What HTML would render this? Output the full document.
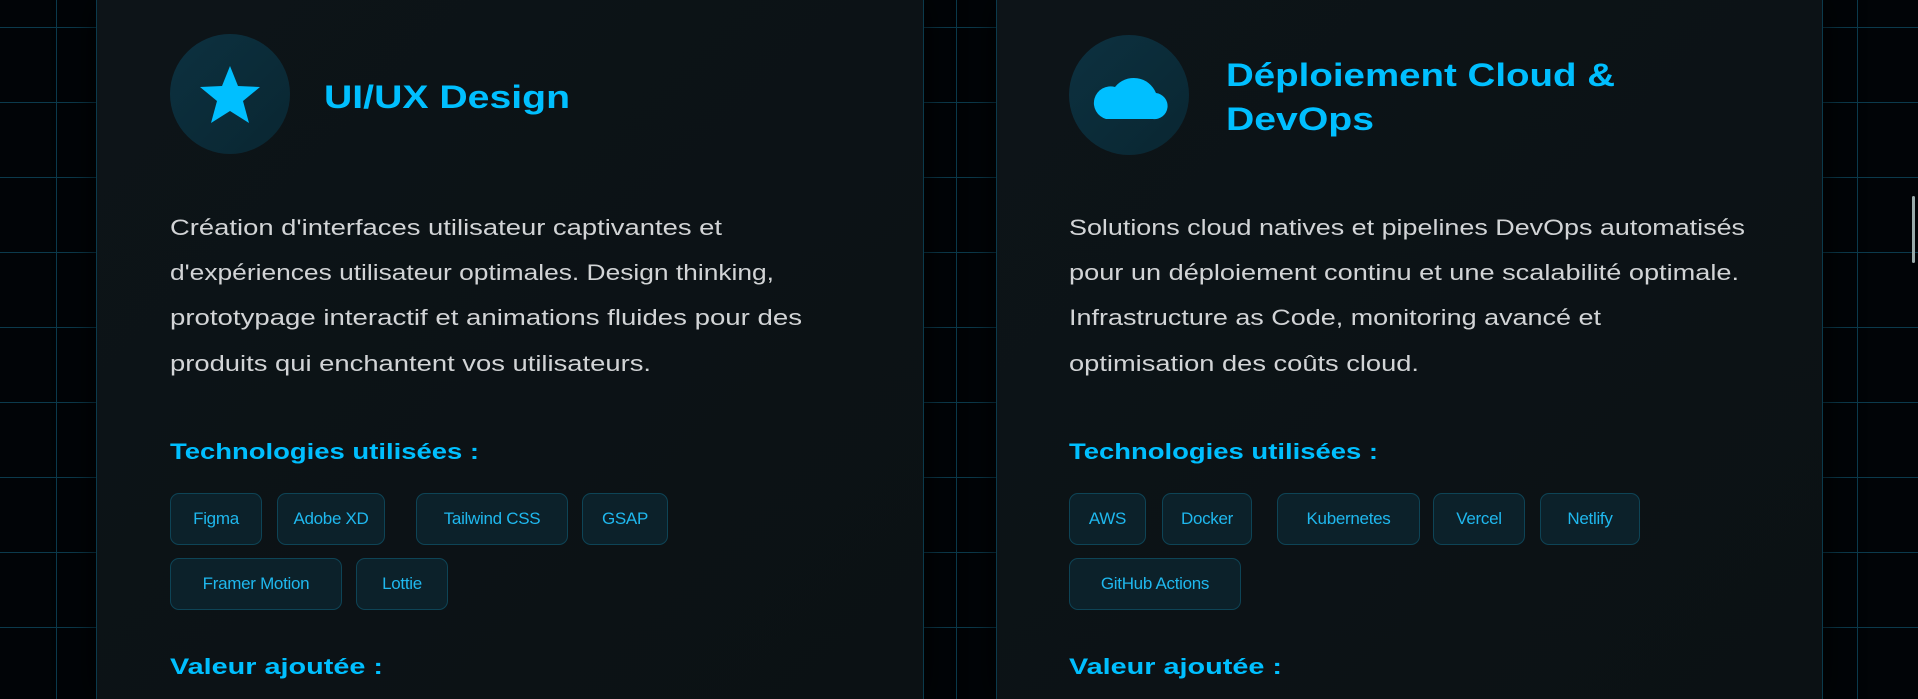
<!DOCTYPE html>
<html><head><meta charset="utf-8"><style>
*{margin:0;padding:0;box-sizing:border-box}
body{width:1918px;height:699px;overflow:hidden;background:#010407;position:relative;font-family:"Liberation Sans",sans-serif}
.grid{position:absolute;inset:0;
background-image:linear-gradient(#0b3a4c 1px,transparent 1px);background-size:100% 75px;background-position:0 27px}
.vl{position:absolute;top:0;height:699px;width:1px;background:#0b3a4c}
.card{position:absolute;top:0;height:699px;background:linear-gradient(135deg,#0d1418,#0b1114);border-left:1px solid #0b3a4c;border-right:1px solid #0b3a4c;box-shadow:0 0 30px rgba(0,0,0,.9)}
.ic{position:absolute;width:120px;height:120px;border-radius:50%;background:linear-gradient(135deg,#0c3140,#0a2631)}
.tag{position:absolute;height:52px;line-height:50px;text-align:center;border:1px solid #0e4456;border-radius:9px;background:#0c212a;color:#1fb8ee;font-size:17px;white-space:nowrap;letter-spacing:-.3px}
svg.t{position:absolute;left:0;top:0}
</style></head><body>
<div class="grid"></div>
<div class="vl" style="left:56px"></div>
<div class="vl" style="left:956px"></div>
<div class="vl" style="left:1857px"></div>

<div class="card" style="left:96px;width:828px">
 <div class="ic" style="left:73px;top:34px">
  <svg width="120" height="120" viewBox="0 0 120 120"><polygon fill="#00bfff" points="60,32 68,52 90,53 73,67 79,89 60,77 41,89 47,67 30,53 52,52"/></svg>
 </div>
</div>
<div class="card" style="left:996px;width:827px">
 <div class="ic" style="left:72px;top:35px">
  <svg width="120" height="120" viewBox="0 0 120 120"><path fill="#00bfff" d="M37,84 H84 A13,13 0 0 0 87,58 A24,24 0 0 0 46,52 A16,16 0 0 0 37,84 Z"/></svg>
 </div>
</div>

<div class="tag" style="left:170px;top:493px;width:92px">Figma</div>
<div class="tag" style="left:277px;top:493px;width:108px">Adobe XD</div>
<div class="tag" style="left:416px;top:493px;width:152px">Tailwind CSS</div>
<div class="tag" style="left:582px;top:493px;width:86px">GSAP</div>
<div class="tag" style="left:170px;top:558px;width:172px">Framer Motion</div>
<div class="tag" style="left:356px;top:558px;width:92px">Lottie</div>

<div class="tag" style="left:1069px;top:493px;width:77px">AWS</div>
<div class="tag" style="left:1162px;top:493px;width:90px">Docker</div>
<div class="tag" style="left:1277px;top:493px;width:143px">Kubernetes</div>
<div class="tag" style="left:1433px;top:493px;width:92px">Vercel</div>
<div class="tag" style="left:1540px;top:493px;width:100px">Netlify</div>
<div class="tag" style="left:1069px;top:558px;width:172px">GitHub Actions</div>

<svg class="t" width="1918" height="699" font-family="Liberation Sans, sans-serif">
 <g fill="#00bfff" font-weight="bold" font-size="32">
  <text x="324" y="108" textLength="246" lengthAdjust="spacingAndGlyphs">UI/UX Design</text>
  <text x="1226" y="86" textLength="389" lengthAdjust="spacingAndGlyphs">Déploiement Cloud &amp;</text>
  <text x="1226" y="130" textLength="148" lengthAdjust="spacingAndGlyphs">DevOps</text>
 </g>
 <g fill="#d2d4d6" font-size="22">
  <text x="170" y="235" textLength="552" lengthAdjust="spacingAndGlyphs">Création d'interfaces utilisateur captivantes et</text>
  <text x="170" y="280" textLength="604" lengthAdjust="spacingAndGlyphs">d'expériences utilisateur optimales. Design thinking,</text>
  <text x="170" y="325" textLength="632" lengthAdjust="spacingAndGlyphs">prototypage interactif et animations fluides pour des</text>
  <text x="170" y="371" textLength="481" lengthAdjust="spacingAndGlyphs">produits qui enchantent vos utilisateurs.</text>
  <text x="1069" y="235" textLength="676" lengthAdjust="spacingAndGlyphs">Solutions cloud natives et pipelines DevOps automatisés</text>
  <text x="1069" y="280" textLength="670" lengthAdjust="spacingAndGlyphs">pour un déploiement continu et une scalabilité optimale.</text>
  <text x="1069" y="325" textLength="532" lengthAdjust="spacingAndGlyphs">Infrastructure as Code, monitoring avancé et</text>
  <text x="1069" y="371" textLength="350" lengthAdjust="spacingAndGlyphs">optimisation des coûts cloud.</text>
 </g>
 <g fill="#00bfff" font-weight="bold" font-size="22">
  <text x="170" y="459" textLength="309" lengthAdjust="spacingAndGlyphs">Technologies utilisées :</text>
  <text x="1069" y="459" textLength="309" lengthAdjust="spacingAndGlyphs">Technologies utilisées :</text>
  <text x="170" y="674" textLength="213" lengthAdjust="spacingAndGlyphs">Valeur ajoutée :</text>
  <text x="1069" y="674" textLength="213" lengthAdjust="spacingAndGlyphs">Valeur ajoutée :</text>
 </g>
</svg>
<div style="position:absolute;left:1912px;top:196px;width:3px;height:67px;background:#9aa;border-radius:2px"></div>
</body></html>
